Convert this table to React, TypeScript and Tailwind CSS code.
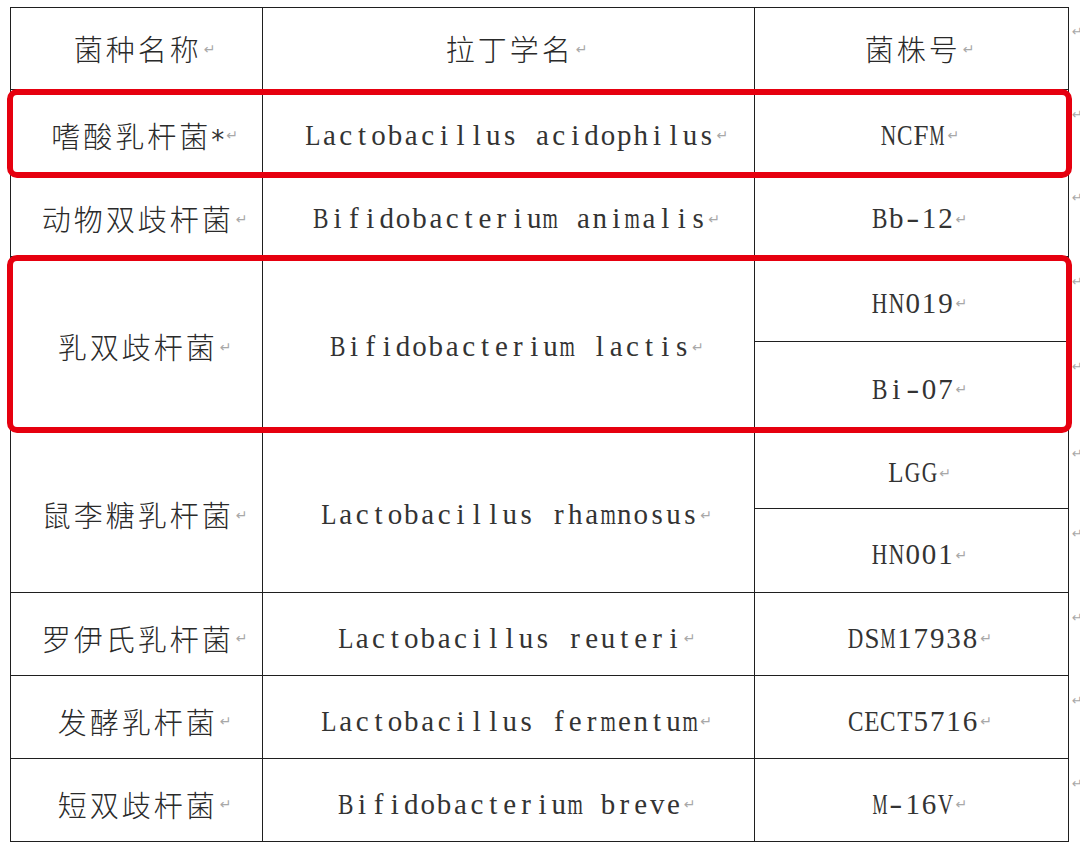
import type { ReactNode } from "react";

interface Row {
  cn: string;
  star?: boolean;
  latin: string;
  strains: string[];
}

const rows: Row[] = [
  { cn: "嗜酸乳杆菌", star: true, latin: "Lactobacillus acidophilus", strains: ["NCFM"] },
  { cn: "动物双歧杆菌", latin: "Bifidobacterium animalis", strains: ["Bb-12"] },
  { cn: "乳双歧杆菌", latin: "Bifidobacterium lactis", strains: ["HN019", "Bi-07"] },
  { cn: "鼠李糖乳杆菌", latin: "Lactobacillus rhamnosus", strains: ["LGG", "HN001"] },
  { cn: "罗伊氏乳杆菌", latin: "Lactobacillus reuteri", strains: ["DSM17938"] },
  { cn: "发酵乳杆菌", latin: "Lactobacillus fermentum", strains: ["CECT5716"] },
  { cn: "短双歧杆菌", latin: "Bifidobacterium breve", strains: ["M-16V"] },
];

function Mark() {
  return <span className="ml-[2px] text-[14px] leading-none text-[#a8a8a8] font-['DejaVu_Sans',sans-serif]">↵</span>;
}

function Cn({ text, star }: { text: string; star?: boolean }) {
  return (
    <span className="flex items-center">
      <span className="font-['Noto_Sans_CJK_SC',sans-serif] font-light text-[29px] tracking-[3px] text-[#2a2a2a] leading-none">{text}</span>
      {star && (
        <span className="inline-block translate-y-[5px] font-['DejaVu_Sans',sans-serif] text-[26px] leading-none text-[#333]">*</span>
      )}
      <Mark />
    </span>
  );
}

// squeeze wide serif glyphs so each one fits a half-width slot
function glyphClass(ch: string) {
  if (ch === "M" || ch === "W") return "inline-block shrink-0 scale-x-[0.58]";
  if (ch === "m" || ch === "w") return "inline-block shrink-0 scale-x-[0.68]";
  if ("ADGHNV".includes(ch)) return "inline-block shrink-0 scale-x-[0.74]";
  if ("BC".includes(ch)) return "inline-block shrink-0 scale-x-[0.8]";
  if ("ELT".includes(ch)) return "inline-block shrink-0 scale-x-[0.86]";
  if ("FS".includes(ch)) return "inline-block shrink-0 scale-x-[0.93]";
  if (ch === "-") return "inline-block shrink-0 scale-x-[1.35]";
  return "inline-block shrink-0";
}

// SimSun-like latin: every character sits centred in the same half-width slot
function Half({ text }: { text: string }) {
  return (
    <span className="flex items-center">
      <span className="inline-flex font-['Liberation_Serif',serif] text-[29px] leading-none text-[#333]">
        {[...text].map((ch, i) => (
          <span key={i} className="inline-flex justify-center w-[16.4px]">
            <span className={glyphClass(ch)}>{ch === " " ? "\u00a0" : ch}</span>
          </span>
        ))}
      </span>
      <Mark />
    </span>
  );
}

function Cell({ children, className = "" }: { children: ReactNode; className?: string }) {
  return (
    <div className={`flex items-center justify-center pl-4 pt-2 border-r border-b border-[#1f1f1f] ${className}`}>
      {children}
    </div>
  );
}

function RowMark() {
  return <div className="pt-[18px] pl-[3px] text-[13px] leading-none text-[#a8a8a8] font-['DejaVu_Sans',sans-serif]">↵</div>;
}

export default function App() {
  return (
    <div className="relative w-[1080px] h-[852px] overflow-hidden bg-white pt-[7px] pl-[10px]">
      <div className="grid grid-cols-[253px_492px_314px_11px] grid-rows-[83px_83px_84px_85px_87px_80px_84px_83px_83px_83px]">
        <Cell className="border-l border-t !pt-0"><Cn text="菌种名称" /></Cell>
        <Cell className="border-t !pt-0"><Cn text="拉丁学名" /></Cell>
        <Cell className="border-t !pt-0"><Cn text="菌株号" /></Cell>
        <RowMark />
        {rows.map((r) => {
          const span = r.strains.length > 1 ? "row-span-2" : "";
          return [
            <Cell key={r.cn + "c"} className={`border-l ${span}`}><Cn text={r.cn} star={r.star} /></Cell>,
            <Cell key={r.cn + "l"} className={span}><Half text={r.latin} /></Cell>,
            ...r.strains.flatMap((s) => [
              <Cell key={s}><Half text={s} /></Cell>,
              <RowMark key={s + "m"} />,
            ]),
          ];
        })}
      </div>

      {/* red highlight boxes */}
      <div className="absolute left-[7px] top-[89px] w-[1065px] h-[89px] rounded-[10px] border-[6px] border-[#e6000f]" />
      <div className="absolute left-[7px] top-[255px] w-[1065px] h-[178px] rounded-[10px] border-[6px] border-[#e6000f]" />
    </div>
  );
}
